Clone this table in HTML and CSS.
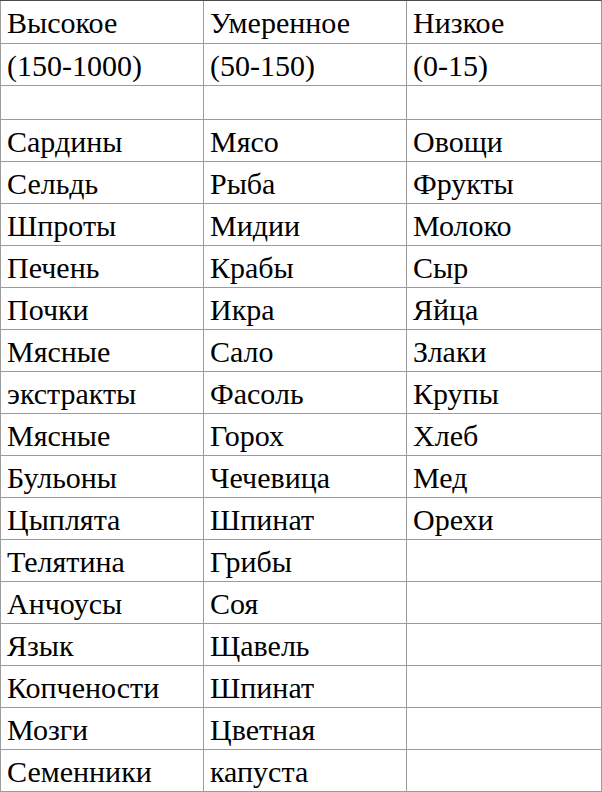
FILE: index.html
```html
<!DOCTYPE html>
<html lang="ru">
<head>
<meta charset="utf-8">
<title>Пурины</title>
<link rel="stylesheet" href="styles.css">
</head>
<body class="page">
<table class="sheet">
  <colgroup><col class="w1"><col class="w2"><col class="w3"></colgroup>
  <tr><td>Высокое</td><td>Умеренное</td><td>Низкое</td></tr>
  <tr><td>(150-1000)</td><td>(50-150)</td><td>(0-15)</td></tr>
  <tr class="gap"><td></td><td></td><td></td></tr>
  <tr><td>Сардины</td><td>Мясо</td><td>Овощи</td></tr>
  <tr><td>Сельдь</td><td>Рыба</td><td>Фрукты</td></tr>
  <tr><td>Шпроты</td><td>Мидии</td><td>Молоко</td></tr>
  <tr><td>Печень</td><td>Крабы</td><td>Сыр</td></tr>
  <tr><td>Почки</td><td>Икра</td><td>Яйца</td></tr>
  <tr><td>Мясные</td><td>Сало</td><td>Злаки</td></tr>
  <tr><td>экстракты</td><td>Фасоль</td><td>Крупы</td></tr>
  <tr><td>Мясные</td><td>Горох</td><td>Хлеб</td></tr>
  <tr><td>Бульоны</td><td>Чечевица</td><td>Мед</td></tr>
  <tr><td>Цыплята</td><td>Шпинат</td><td>Орехи</td></tr>
  <tr><td>Телятина</td><td>Грибы</td><td></td></tr>
  <tr><td>Анчоусы</td><td>Соя</td><td></td></tr>
  <tr><td>Язык</td><td>Щавель</td><td></td></tr>
  <tr><td>Копчености</td><td>Шпинат</td><td></td></tr>
  <tr><td>Мозги</td><td>Цветная</td><td></td></tr>
  <tr><td>Семенники</td><td>капуста</td><td></td></tr>
</table>
</body>
</html>
```
FILE: styles.css
```css
.page {
  margin: 0;
  font-family: "Times New Roman", "Liberation Serif", Tinos, serif;
  font-size: 30px;
}

.sheet {
  width: 602px;
  table-layout: fixed;
  border-spacing: 0;
  border-top: 1px solid #4a4a4a;
  border-right: 1px solid #9c9c9c;
  border-bottom: 1px solid #9c9c9c;
  font-family: "Times New Roman", "Liberation Serif", Tinos, serif;
  font-size: 30px;
  line-height: 30px;
}

.w1, .w2 { width: 203px; }
.w3 { width: 195px; }

.sheet td {
  box-sizing: border-box;
  height: 42px;
  padding: 7px 0 0 6px;
  vertical-align: top;
  border-left: 1px solid #9c9c9c;
  border-top: 1px solid #9c9c9c;
  white-space: nowrap;
  overflow: hidden;
}

.sheet tr:first-child td {
  border-top: none;
}

.sheet .gap td {
  height: 34px;
}
```
